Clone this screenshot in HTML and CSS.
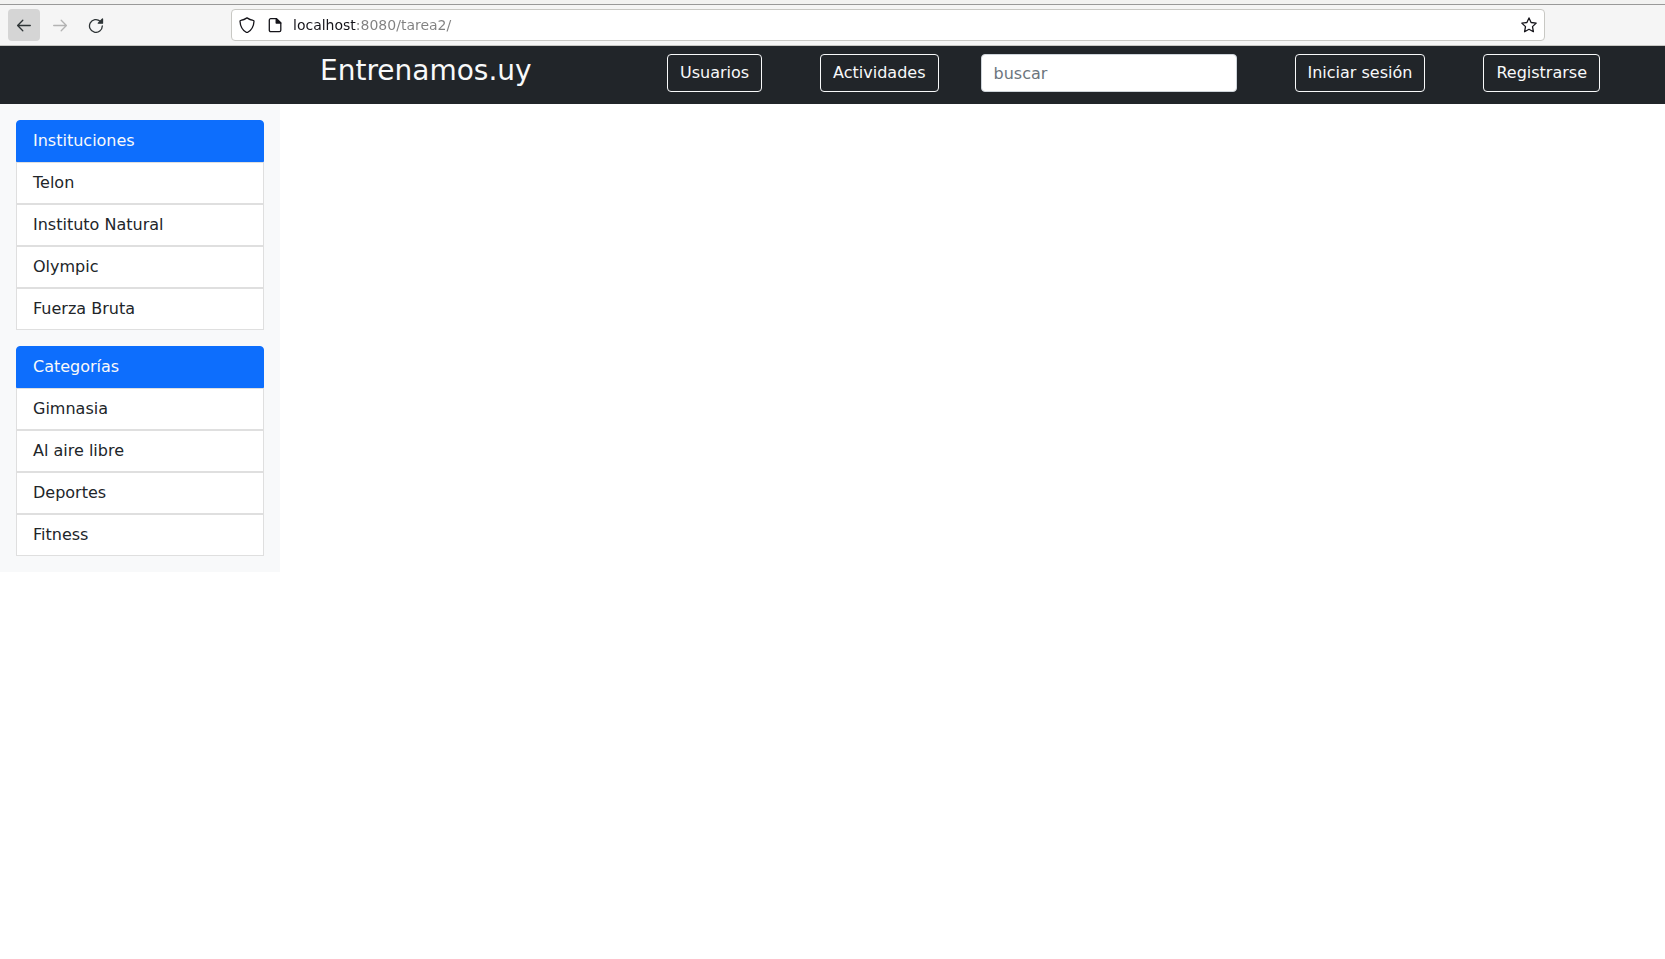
FILE: index.html
```
<!DOCTYPE html>
<html lang="es">
<head>
<meta charset="utf-8">
<meta name="viewport" content="width=device-width, initial-scale=1">
<title>Entrenamos.uy</title>
<link rel="stylesheet" href="styles.css">
</head>
<body>
<div class="toolbar">
  <div class="toolbar-buttons">
    <button class="tool tool-active" type="button" aria-label="Atrás">
      <svg width="16" height="16" viewBox="0 0 16 16" fill="none" stroke="currentColor" stroke-width="1.3" stroke-linecap="round" stroke-linejoin="round"><path d="M14.3 8.5H1.7M6.8 3.3L1.6 8.5l5.2 5.2"/></svg>
    </button>
    <button class="tool" type="button" aria-label="Adelante" disabled>
      <svg width="16" height="16" viewBox="0 0 16 16" fill="none" stroke="currentColor" stroke-width="1.3" stroke-linecap="round" stroke-linejoin="round"><path d="M1.7 8.5h12.6M9.2 3.3l5.2 5.2-5.2 5.2"/></svg>
    </button>
    <button class="tool" type="button" aria-label="Recargar">
      <svg width="16" height="16" viewBox="0 0 16 16" fill="none" stroke="currentColor" stroke-width="1.3" stroke-linecap="round" stroke-linejoin="round"><path d="M12.2 4.2A6.4 6.4 0 1 0 14.3 9"/><path d="M14.5 2v4.2h-4.2z" fill="currentColor"/></svg>
    </button>
  </div>
  <form class="address">
    <svg class="address-icon" width="16" height="16" viewBox="0 0 16 16" fill="none" stroke="currentColor" stroke-width="1.3" stroke-linejoin="round"><path d="M8 .9C9.800 2.200 12 3.100 14.200 3.300c.5 0 .8.400.8.900-.3 5.300-2 8.600-6.200 11.100q-.8.400-1.600 0C3 12.800 1.300 9.500 1 4.200c0-.5.300-.9.800-.9C4 3.100 6.200 2.200 8 .9z"/></svg>
    <svg class="address-icon" width="16" height="16" viewBox="0 0 16 16" fill="none" stroke="currentColor" stroke-width="1.3" stroke-linejoin="round"><path d="M3.700 1.700h5.800l4.300 4.300v7.300a1.400 1.400 0 0 1-1.400 1.400H3.700a1.400 1.400 0 0 1-1.400-1.400V3.100a1.400 1.400 0 0 1 1.400-1.400z"/><path d="M9.200 1.700V6h4.600z" fill="currentColor"/></svg>
    <input class="address-input" type="text" aria-label="Dirección" value="localhost:8080/tarea2/">
    <button class="bookmark" type="button" aria-label="Marcador">
      <svg width="16" height="16" viewBox="0 0 16 16" fill="none" stroke="currentColor" stroke-width="1.3" stroke-linejoin="round"><path d="M8 .9l2.100 4.600 5.100.6-3.700 3.500.9 5.100L8 12.300l-4.400 2.400.9-5.100L.8 6.100l5.100-.6z"/></svg>
    </button>
  </form>
</div>
<header class="navbar">
  <h1 class="brand">Entrenamos.uy</h1>
  <nav class="nav-main">
    <button class="btn" type="button">Usuarios</button>
    <button class="btn" type="button">Actividades</button>
  </nav>
  <input class="search" type="search" aria-label="buscar" placeholder="buscar">
  <div class="nav-session">
    <button class="btn" type="button">Iniciar sesión</button>
    <button class="btn" type="button">Registrarse</button>
  </div>
</header>
<aside class="sidebar">
  <div class="list">
    <a class="item item-active" href="#">Instituciones</a>
    <a class="item" href="#">Telon</a>
    <a class="item" href="#">Instituto Natural</a>
    <a class="item" href="#">Olympic</a>
    <a class="item" href="#">Fuerza Bruta</a>
  </div>
  <div class="list">
    <a class="item item-active" href="#">Categorías</a>
    <a class="item" href="#">Gimnasia</a>
    <a class="item" href="#">Al aire libre</a>
    <a class="item" href="#">Deportes</a>
    <a class="item" href="#">Fitness</a>
  </div>
</aside>
</body>
</html>
```
FILE: styles.css
```
* { box-sizing: border-box; }

body {
  margin: 0;
  background: #fff;
  color: #212529;
  font: 16px/24px "DejaVu Sans", sans-serif;
}

button, input { font: inherit; }
svg { display: block; flex: none; }

.toolbar {
  display: flex;
  padding: 4px 120px 4px 8px;
  border-top: 1px solid #999;
  border-bottom: 1px solid #c8c8c4;
  margin-top: 4px;
  background: #f5f5f5;
}

html { background: linear-gradient(#f2f2f1 4px, #fff 4px) no-repeat #fff; }
body { background: none; }

.toolbar-buttons {
  display: flex;
  gap: 4px;
  margin-right: 119px;
}

.tool {
  display: grid;
  place-items: center;
  width: 32px;
  height: 32px;
  padding: 0;
  border: 0;
  border-radius: 4px;
  background: none;
  color: #2e3436;
}

.tool-active { background: #d5d5d5; }
.tool:disabled { color: #b3b3b3; }

.address {
  display: flex;
  flex: 1;
  align-items: center;
  gap: 12px;
  height: 32px;
  padding: 0 7px;
  border: 1px solid #c8c8c4;
  border-radius: 4px;
  background: #fff;
  color: #15141a;
}

.address-input {
  flex: 1;
  min-width: 0;
  margin-left: -2px;
  padding: 0;
  border: 0;
  outline: 0;
  background: linear-gradient(90deg, #15141a 63px, #808080 63px);
  -webkit-background-clip: text;
  background-clip: text;
  color: #15141a;
  -webkit-text-fill-color: transparent;
  font-size: 14px;
  line-height: 20px;
}

.bookmark {
  padding: 0;
  border: 0;
  background: none;
  color: inherit;
}

.navbar {
  display: flex;
  align-items: flex-start;
  padding: 8px 65px 12px 320px;
  background: #212529;
}

.brand {
  flex: 1;
  margin: 0;
  color: #f8f9fa;
  font-size: 28px;
  font-weight: 400;
  line-height: 34px;
}

.nav-main, .nav-session {
  display: flex;
  gap: 58px;
}

.btn {
  padding: 6px 12px;
  border: 1px solid #f8f9fa;
  border-radius: 4px;
  background: none;
  color: #f8f9fa;
  white-space: nowrap;
}

.search {
  width: 256px;
  height: 38px;
  margin: 0 58px 0 42px;
  padding: 6px 12px;
  border: 1px solid #ced4da;
  border-radius: 4px;
  background: #fff;
  color: #212529;
  appearance: none;
}

.search::placeholder { color: #6c757d; opacity: 1; }

.sidebar {
  display: flex;
  flex-direction: column;
  gap: 16px;
  width: 280px;
  padding: 16px;
  background: #f8f9fa;
}

.list {
  display: flex;
  flex-direction: column;
}

.item {
  padding: 8px 16px;
  border: 1px solid #dfdfdf;
  background: #fff;
  color: #212529;
  text-decoration: none;
}

.item-active {
  border-color: #0d6efd;
  border-radius: 4px 4px 0 0;
  background: #0d6efd;
  color: #f8f9fa;
}
```
